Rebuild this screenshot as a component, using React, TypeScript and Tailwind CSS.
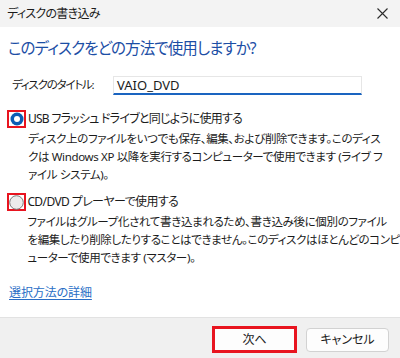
import React from "react";

const font = "font-['Noto_Sans','Noto_Sans_CJK_JP',sans-serif] [font-feature-settings:'palt']";

function RadioChecked() {
  return (
    <div className="w-[19px] h-[18px] border-2 border-[#e8141f] flex items-center justify-center">
      <svg width="14" height="14" viewBox="0 0 14 14">
        <circle cx="7" cy="7" r="6.5" fill="#0a5cb4" />
        <circle cx="7" cy="7" r="3" fill="#ffffff" />
      </svg>
    </div>
  );
}

function RadioUnchecked() {
  return (
    <div className="w-[19px] h-[18px] border-2 border-[#e8141f] flex items-center justify-center">
      <svg width="15" height="15" viewBox="0 0 15 15">
        <circle cx="7.5" cy="7.5" r="6.8" fill="#ececec" stroke="#7a7a7a" strokeWidth="1" />
      </svg>
    </div>
  );
}

export default function App() {
  return (
    <div className={`w-[400px] h-[358px] flex flex-col bg-white text-[#1b1b1b] ${font}`}>
      {/* Title bar */}
      <div className="h-[27px] bg-[#f3f3f3] flex items-center justify-between pl-[7px] pr-[12px]">
        <span className="text-[12px] leading-[16px] tracking-[-0.7px] text-[#1b1b1b]">ディスクの書き込み</span>
        <svg width="11" height="11" viewBox="0 0 11 11">
          <path d="M0.5 0.5 L10.5 10.5 M10.5 0.5 L0.5 10.5" stroke="#2b2b2b" strokeWidth="1.1" />
        </svg>
      </div>

      {/* Body */}
      <div className="flex-1 flex flex-col">
        <div className="pt-[11px] pl-[8px] text-[15.5px] leading-[20px] tracking-[-0.9px] text-[#1c4ea5] whitespace-nowrap">
          このディスクをどの方法で使用しますか?
        </div>

        <div className="mt-[18px] flex items-center h-[18px]">
          <span className="pl-[12px] w-[113px] text-[11.5px] leading-[18px] tracking-[-1.2px] whitespace-nowrap">ディスクのタイトル:</span>
          <div className="w-[249px] h-[19px] border border-[#e6e6e6] border-b-2 border-b-[#1a64c0] flex items-center pl-[3px] text-[13px] leading-[16px]">
            VAIO_DVD
          </div>
        </div>

        {/* Option 1 */}
        <div className="mt-[16px] flex pl-[7px]">
          <div className="w-[21px]">
            <RadioChecked />
          </div>
          <div className="flex flex-col text-[11.5px] leading-[18px] tracking-[-0.35px] whitespace-nowrap">
            <span className="text-[12px] tracking-[-0.75px]">USB フラッシュ ドライブと同じように使用する</span>
            <span className="mt-[2px]">ディスク上のファイルをいつでも保存、編集、および削除できます。このディス</span>
            <span>クは Windows XP 以降を実行するコンピューターで使用できます (ライブ フ</span>
            <span>ァイル システム)。</span>
          </div>
        </div>

        {/* Option 2 */}
        <div className="mt-[9px] flex pl-[7px]">
          <div className="w-[21px]">
            <RadioUnchecked />
          </div>
          <div className="flex flex-col text-[11.5px] leading-[18px] tracking-[-0.35px] whitespace-nowrap">
            <span className="text-[12px] tracking-[-0.6px]">CD/DVD プレーヤーで使用する</span>
            <span className="mt-[2px]">ファイルはグループ化されて書き込まれるため、書き込み後に個別のファイル</span>
            <span>を編集したり削除したりすることはできません。このディスクはほとんどのコンピ</span>
            <span>ューターで使用できます (マスター)。</span>
          </div>
        </div>

        <div className="mt-[17px] pl-[9px] text-[12px] leading-[18px] tracking-[-0.1px]">
          <span className="text-[#2a6ec6] underline underline-offset-2">選択方法の詳細</span>
        </div>
      </div>

      {/* Footer */}
      <div className="h-[41px] bg-[#f0f0f0] border-t border-[#e2e2e2] flex items-start justify-end pt-[8px] pr-[11px] gap-[9px]">
        <div className="w-[85px] h-[27px] border-[3px] border-[#e8141f] bg-[#fdfdfd] flex items-center justify-center text-[12px]">
          次へ
        </div>
        <div className="mt-[2px] w-[83px] h-[24px] rounded-[4px] border border-[#d2d2d2] bg-[#fdfdfd] flex items-center justify-center text-[12px]">
          キャンセル
        </div>
      </div>
    </div>
  );
}
